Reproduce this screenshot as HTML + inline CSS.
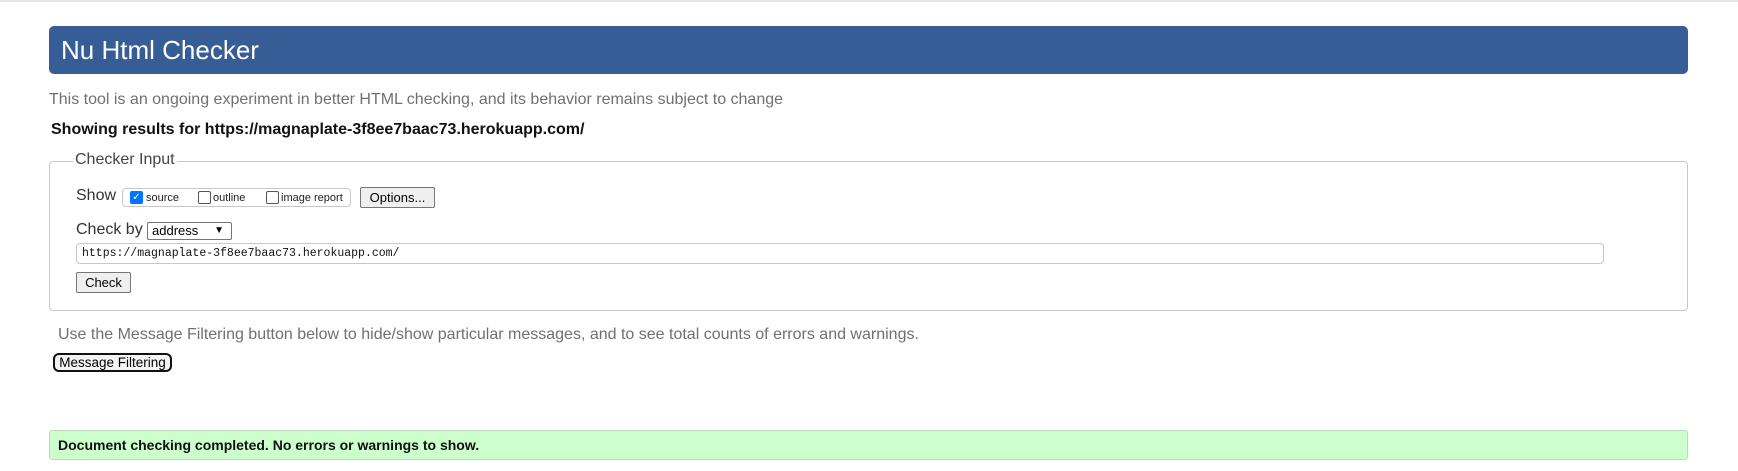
<!DOCTYPE html>
<html><head><style>
body{margin:0;width:1738px;height:471px;background:#fff;font-family:"Liberation Sans",Arial,sans-serif;position:relative;overflow:hidden}
.a{position:absolute}
.topline{left:0;top:0;width:1738px;height:2px;background:#e6e6e6}
.hdr{left:49px;top:26px;width:1639px;height:48px;background:#365d95;border-radius:5px;color:#fff;font-size:26px;line-height:48px;padding-left:12px;box-sizing:border-box}
.g{color:#707070;font-size:16px}
.fs{left:49px;top:161px;width:1639px;height:150px;border:1px solid #c8c8c8;border-radius:4px;box-sizing:border-box}
.leg{left:73px;top:151px;background:#fff;padding:0 2px;font-size:16px;color:#444}
.btn{border:1px solid #767676;background:#efefef;border-radius:2px;font-size:13px;color:#000;text-align:center;box-sizing:border-box}
.cb{display:inline-block;width:13px;height:13px;border:1px solid #555;border-radius:2px;box-sizing:border-box;background:#fff}
</style></head><body>
<div class="a topline"></div>
<div class="a hdr">Nu Html Checker</div>
<div class="a g" style="left:49px;top:91px">This tool is an ongoing experiment in better HTML checking, and its behavior remains subject to change</div>
<div class="a" style="left:51px;top:121px;font-size:16px;font-weight:bold;color:#111">Showing results for https://magnaplate-3f8ee7baac73.herokuapp.com/</div>
<div class="a fs"></div>
<div class="a leg">Checker Input</div>
<div class="a" style="left:76px;top:187px;font-size:16px;color:#333">Show</div>
<div class="a" style="left:122px;top:188px;width:229px;height:19px;border:1px solid #c8c8c8;border-radius:4px;box-sizing:border-box;font-size:11px;line-height:19px;color:#222;white-space:nowrap">
<span style="position:absolute;left:7px;top:2px;width:13px;height:13px;background:#0075ff;border-radius:2px;color:#fff;font-size:10px;line-height:13px;text-align:center">✓</span>
<span style="position:absolute;left:23px">source</span>
<span class="cb" style="position:absolute;left:75px;top:2px"></span><span style="position:absolute;left:90px">outline</span>
<span class="cb" style="position:absolute;left:143px;top:2px"></span><span style="position:absolute;left:158px">image report</span>
</div>
<div class="a btn" style="left:360px;top:187px;width:75px;height:21px;line-height:19px">Options...</div>
<div class="a" style="left:76px;top:221px;font-size:16px;color:#333">Check by</div>
<div class="a" style="left:147px;top:222px;width:85px;height:18px;border:1px solid #767676;border-radius:2px;box-sizing:border-box;font-size:13px;line-height:16px;padding-left:4px">address<span style="position:absolute;right:7px;top:0;font-size:10px">▼</span></div>
<div class="a" style="left:76px;top:243px;width:1528px;height:21px;border:1px solid #c8c8c8;border-radius:4px;box-sizing:border-box;font-family:'Liberation Mono',monospace;font-size:11.5px;line-height:19px;padding-left:5px;color:#111">https://magnaplate-3f8ee7baac73.herokuapp.com/</div>
<div class="a btn" style="left:76px;top:272px;width:55px;height:21px;line-height:19px">Check</div>
<div class="a g" style="left:58px;top:326px">Use the Message Filtering button below to hide/show particular messages, and to see total counts of errors and warnings.</div>
<div class="a" style="left:53px;top:353px;width:119px;height:19px;border:2px solid #111;border-radius:6px;box-sizing:border-box;font-size:13.5px;line-height:15px;text-align:center;background:#f4f4f4">Message Filtering</div>
<div class="a" style="left:49px;top:430px;width:1639px;height:30px;background:#ccffcc;border:1px solid #bdd8bd;border-radius:3px;box-sizing:border-box;font-size:14px;font-weight:bold;line-height:28px;padding-left:8px;color:#111">Document checking completed. No errors or warnings to show.</div>
</body></html>
